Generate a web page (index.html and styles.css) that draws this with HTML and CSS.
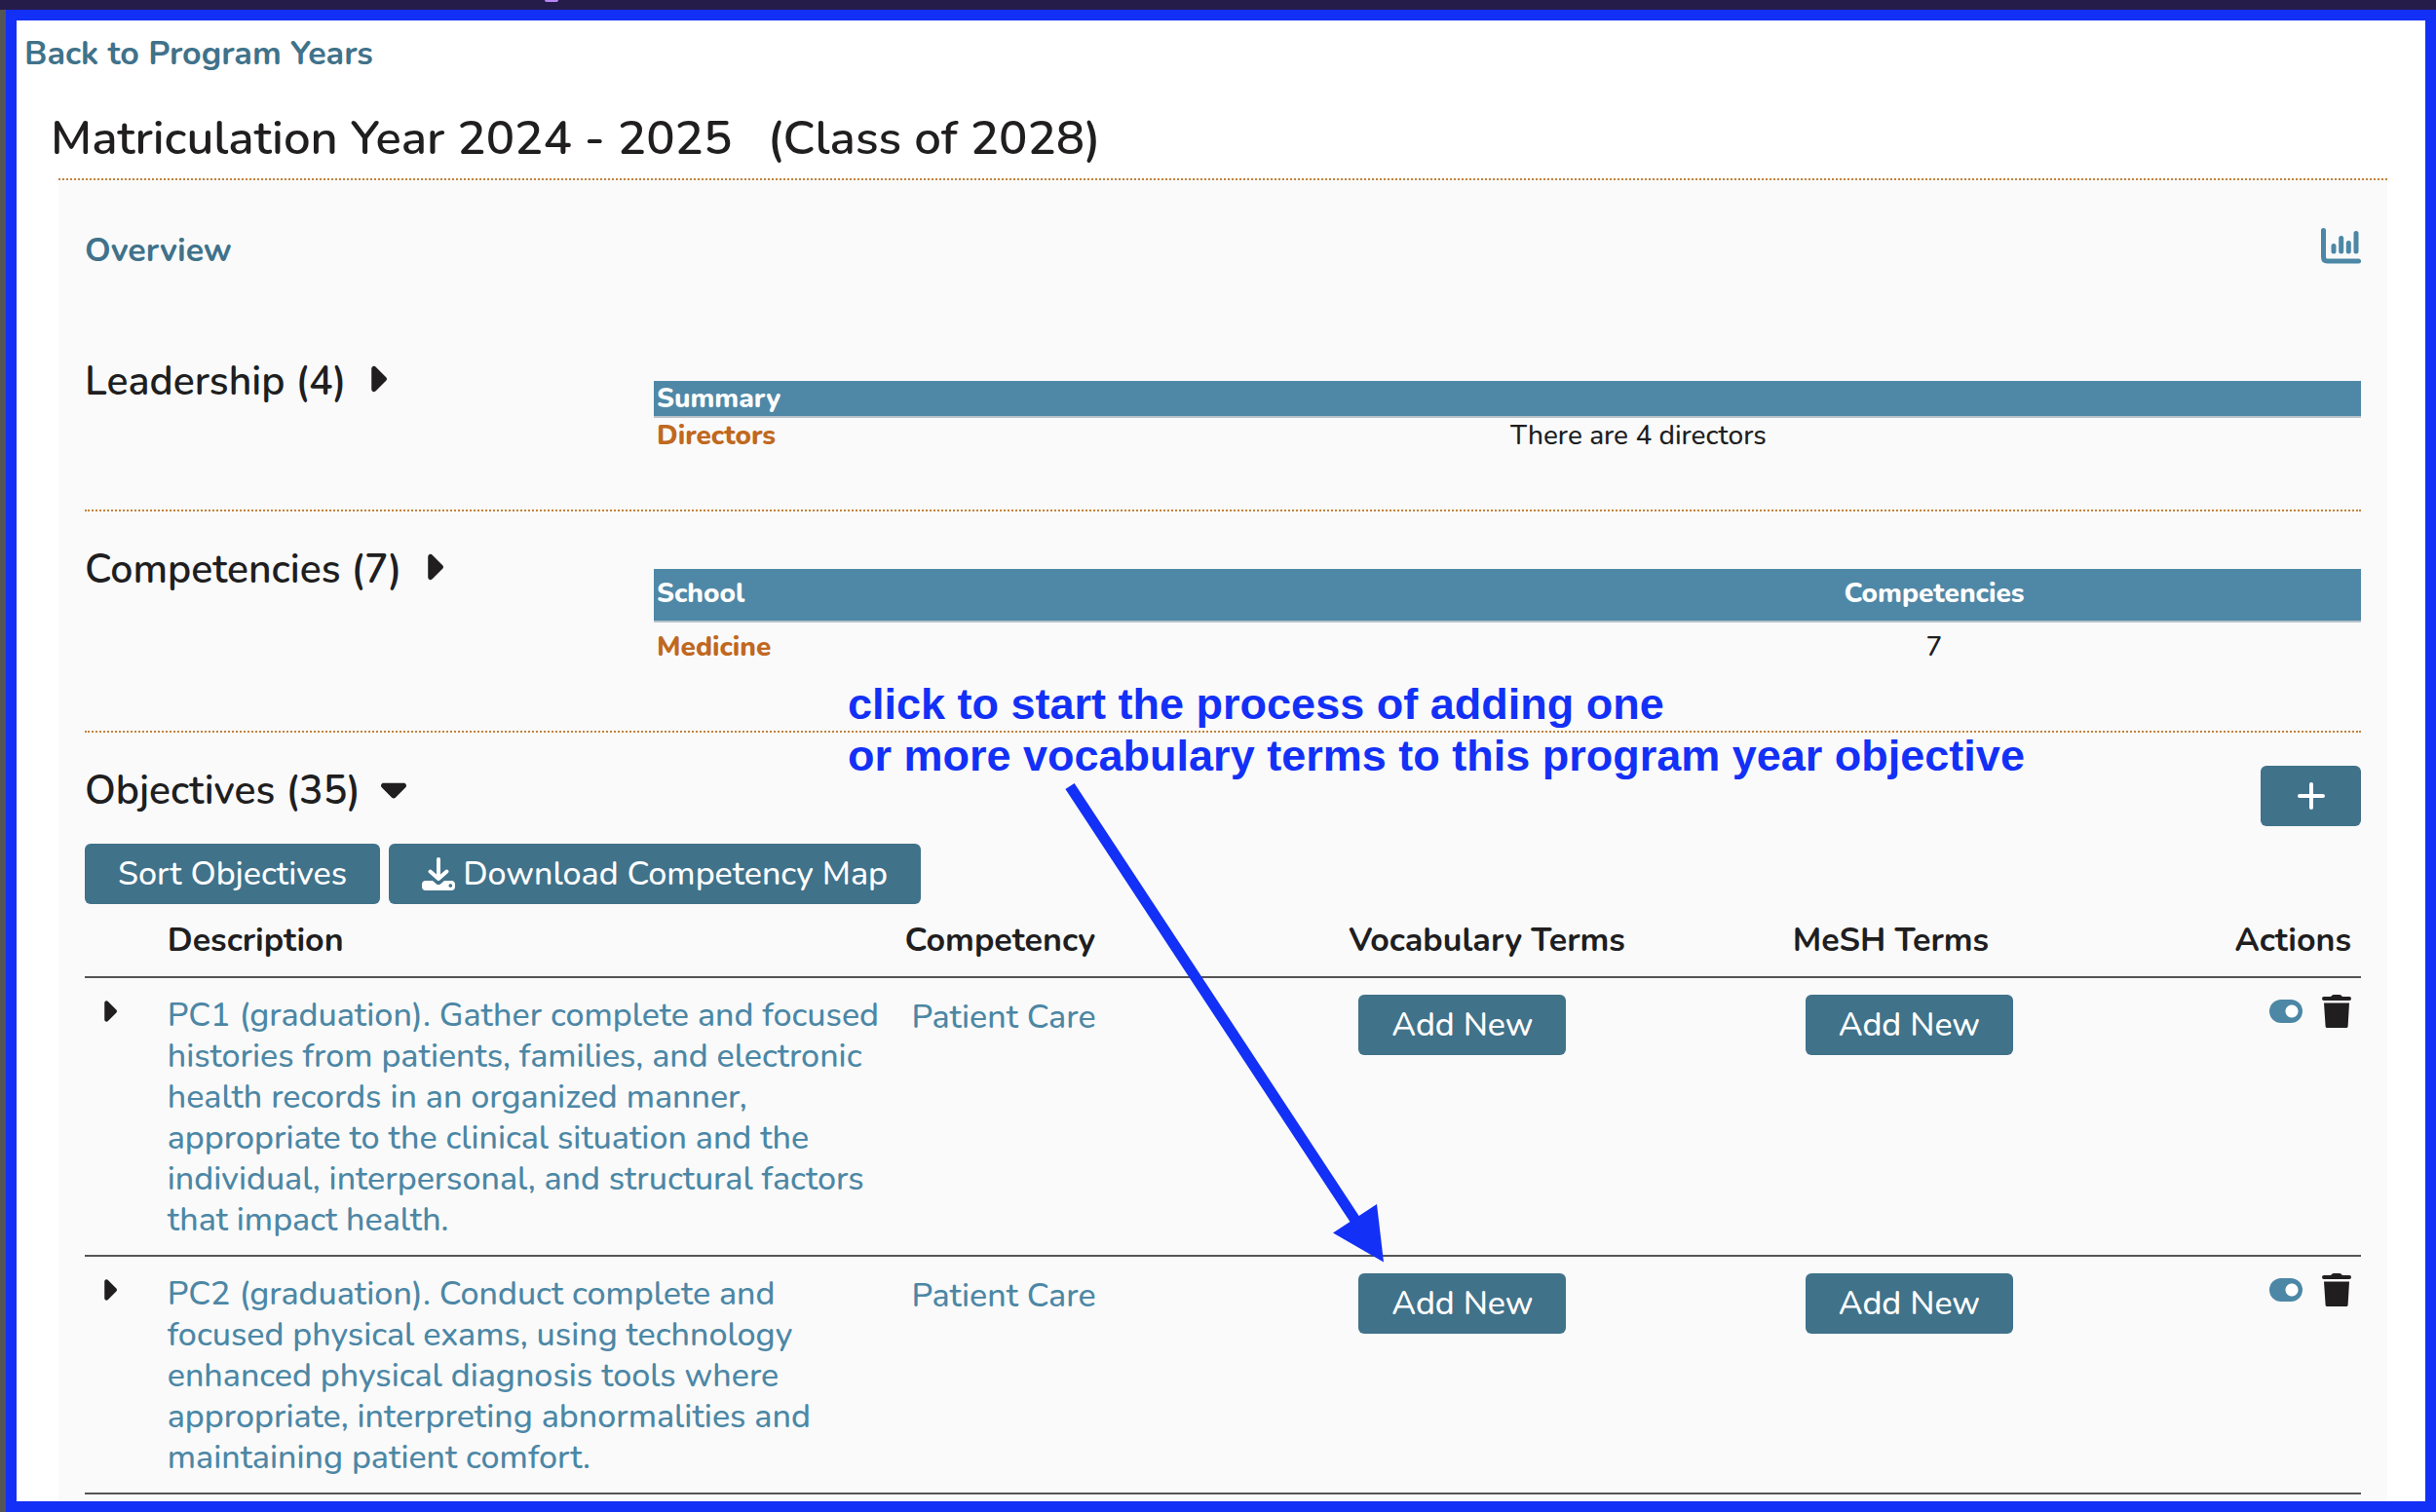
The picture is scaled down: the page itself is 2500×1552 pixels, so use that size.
FILE: index.html
```html
<!DOCTYPE html>
<html lang="en">
<head>
<meta charset="utf-8">
<title>Matriculation Year 2024 - 2025</title>
<link rel="stylesheet" href="styles.css">
</head>
<body>
<svg class="sprite" aria-hidden="true">
  <symbol id="caret-right" viewBox="0 0 256 512"><path d="M246.600 278.600c12.500-12.500 12.500-32.800 0-45.300l-128-128c-9.200-9.200-22.900-11.900-34.900-6.900s-19.800 16.600-19.800 29.600l0 256c0 12.900 7.800 24.600 19.800 29.600s25.700 2.200 34.900-6.900l128-128z"/></symbol>
  <symbol id="caret-down" viewBox="0 0 320 512"><path d="M137.400 374.600c12.500 12.500 32.800 12.500 45.300 0l128-128c9.200-9.200 11.900-22.900 6.900-34.900s-16.600-19.800-29.600-19.800L32 192c-12.900 0-24.600 7.800-29.600 19.800s-2.200 25.700 6.900 34.900l128 128z"/></symbol>
  <symbol id="trash" viewBox="0 0 30 34"><path d="M2 2h7l1.500-1.600Q11 0 12 0h6q1 0 1.500.4L21 2h7q2 0 2 2t-2 2H2Q0 6 0 4t2-2zM2 8.500h26l-1.400 24Q26.500 34 25 34H5.200q-1.500 0-1.600-1.500z"/></symbol>
</svg>
<div class="topbar"><span class="topbar-mark"></span></div>
<main class="frame">
  <a class="back" href="#">Back to Program Years</a>
  <h1 class="title"><span>Matriculation Year 2024 - 2025</span><span>(Class of 2028)</span></h1>
  <div class="panel">
    <div class="overview">
      <h2 class="overview-title">Overview</h2>
      <a class="chart-link" href="#" aria-label="Curriculum charts">
        <svg class="line-icon" width="41" height="38" viewBox="0 0 41 38" stroke-width="5"><path d="M2.500 2.500V30q0 4 4 4H38.500M13 18.500V24M20.700 10.500V24M28.300 15.500V24M36 5.500V24"/></svg>
      </a>
    </div>

    <section class="section split">
      <h2 class="heading"><button class="toggle" type="button">Leadership (4)<svg class="caret"><use href="#caret-right"/></svg></button></h2>
      <table class="summary tight">
        <thead><tr><th scope="col" colspan="2">Summary</th></tr></thead>
        <tbody><tr><th scope="row">Directors</th><td>There are 4 directors</td></tr></tbody>
      </table>
    </section>

    <section class="section split">
      <h2 class="heading"><button class="toggle" type="button">Competencies (7)<svg class="caret"><use href="#caret-right"/></svg></button></h2>
      <table class="summary">
        <thead><tr><th scope="col">School</th><th class="center" scope="col">Competencies</th></tr></thead>
        <tbody><tr><th scope="row">Medicine</th><td class="center">7</td></tr></tbody>
      </table>
    </section>

    <section class="objectives">
      <div class="objectives-head">
        <h2 class="heading"><button class="toggle" type="button">Objectives (35)<svg class="caret down"><use href="#caret-down"/></svg></button></h2>
        <button class="btn plus" type="button" aria-label="Add objective"><svg class="line-icon" width="28" height="28" viewBox="0 0 28 28" stroke-width="4"><path d="M14 2v24M2 14h24"/></svg></button>
      </div>
      <div class="tools">
        <button class="btn" type="button">Sort Objectives</button>
        <button class="btn" type="button"><svg width="34" height="34" viewBox="0 0 34 34"><path d="M17 2v19M8.500 14.500l8.500 7.500 8.500-7.500" fill="none" stroke="currentColor" stroke-width="4" stroke-linecap="round" stroke-linejoin="round"/><path fill-rule="evenodd" d="M4 24h7l4 3.500q2 1.500 4 0l4-3.500h7q4 0 4 4v2q0 4-4 4H4q-4 0-4-4v-2q0-4 4-4zM29.300 27.200a1.800 1.800 0 1 0 .01 0z"/></svg>Download Competency Map</button>
      </div>
      <table class="list">
        <colgroup><col class="col-caret"><col class="col-desc"><col class="col-mid"><col class="col-mid"><col></colgroup>
        <thead>
          <tr><td></td><th scope="col">Description</th><th scope="col">Competency</th><th scope="col">Vocabulary Terms</th><th scope="col"><div class="last"><span>MeSH Terms</span><span>Actions</span></div></th></tr>
        </thead>
        <tbody>
          <tr>
            <td><button class="expand" type="button" aria-label="Expand PC1"><svg><use href="#caret-right"/></svg></button></td>
            <td><a class="desc" href="#">PC1 (graduation). Gather complete and focused histories from patients, families, and electronic health records in an organized manner, appropriate to the clinical situation and the individual, interpersonal, and structural factors that impact health.</a></td>
            <td><button class="link" type="button">Patient Care</button></td>
            <td><button class="btn add" type="button">Add New</button></td>
            <td><div class="last"><button class="btn add" type="button">Add New</button><div class="actions"><input class="switch" type="checkbox" checked aria-label="PC1 active"><button class="icon" type="button" aria-label="Remove PC1"><svg><use href="#trash"/></svg></button></div></div></td>
          </tr>
          <tr>
            <td><button class="expand" type="button" aria-label="Expand PC2"><svg><use href="#caret-right"/></svg></button></td>
            <td><a class="desc" href="#">PC2 (graduation). Conduct complete and focused physical exams, using technology enhanced physical diagnosis tools where appropriate, interpreting abnormalities and maintaining patient comfort.</a></td>
            <td><button class="link" type="button">Patient Care</button></td>
            <td><button class="btn add" type="button">Add New</button></td>
            <td><div class="last"><button class="btn add" type="button">Add New</button><div class="actions"><input class="switch" type="checkbox" checked aria-label="PC2 active"><button class="icon" type="button" aria-label="Remove PC2"><svg><use href="#trash"/></svg></button></div></div></td>
          </tr>
        </tbody>
      </table>
    </section>
  </div>
</main>
<p class="note">click to start the process of adding one<br>or more vocabulary terms to this program year objective</p>
<svg class="arrow" width="332" height="497" viewBox="0 0 332 497" aria-hidden="true"><path d="M8 7L302 454" stroke="#1330f6" stroke-width="11"/><path d="M330 495.500L278 465.500L323 436z" fill="#1330f6"/></svg>
</body>
</html>
```
FILE: styles.css
```css
* { box-sizing: border-box; }

body {
  margin: 0;
  min-height: 100vh;
  display: flex;
  flex-direction: column;
  position: relative;
  background: #555;
  color: #201e1f;
  font: 500 34px/42px Nunito, "Open Sans", sans-serif;
}

h1, h2, p { margin: 0; }
a { color: inherit; text-decoration: none; }
button { font: inherit; color: inherit; border: 0; margin: 0; padding: 0; background: none; }
svg { display: block; fill: currentColor; }
.line-icon { fill: none; stroke: currentColor; stroke-linecap: round; }
.sprite { position: absolute; width: 0; height: 0; }

.topbar { height: 10px; background: #261c4a; padding-left: 559px; }
.topbar-mark { display: block; width: 14px; height: 2px; border-radius: 0 0 7px 7px; background: #b888f8; }

.frame {
  flex: 1;
  display: flex;
  flex-direction: column;
  margin: 0 0 0 6px;
  border: 11px solid #1330f6;
  background: #fff;
}

.back { margin: 13px 0 0 8px; color: #40728a; font-weight: 700; }
.title {
  display: flex;
  gap: 36px;
  margin: 36px 0 11px 35px;
  font-size: 49px;
  line-height: 60px;
  font-weight: 600;
}

.panel {
  flex: 1;
  margin: 0 39px 0 43px;
  padding: 49px 27px 0;
  border-top: 2px dotted #c4823a;
  background: #fafafa;
}

.overview { display: flex; justify-content: space-between; margin-bottom: 88px; padding-top: 2px; }
.overview-title { font-size: 34px; line-height: 42px; font-weight: 700; color: #40728a; }
.chart-link { color: #4c87a5; height: 42px; margin-top: -2px; }

.section { border-bottom: 2px dotted #c4823a; padding-bottom: 59px; margin-bottom: 34px; }
.split { display: grid; grid-template-columns: 1fr 3fr; align-items: start; }
.heading { font-size: 41px; line-height: 52px; font-weight: 600; }
.toggle { display: flex; align-items: center; gap: 21px; }
.caret { width: 21px; height: 42px; margin-bottom: 6px; }
.caret.down { width: 26px; }

.summary {
  width: 100%;
  margin-top: 25px;
  table-layout: fixed;
  border-collapse: separate;
  border-spacing: 0;
  font-size: 28px;
  line-height: 34px;
  text-align: left;
}
.summary th, .summary td { padding: 8px 3px 10px; }
.summary thead th { background: #4f88a6; color: #fff; padding-bottom: 11px; border-bottom: 2px solid #b8c2c8; font-weight: 800; }
.summary tbody th { color: #c06820; font-weight: 800; }
.summary .center { text-align: center; }
.tight thead th { padding: 1px 3px; }
.tight tbody th, .tight tbody td { padding: 1px 3px 0; }

.objectives-head { display: flex; justify-content: space-between; height: 80px; align-items: flex-start; }
.tools { display: flex; gap: 9px; }
.btn {
  display: flex;
  align-items: center;
  justify-content: center;
  gap: 8px;
  padding: 10px 34px;
  border-radius: 6px;
  background: #40728a;
  color: #fff;
}
.plus { width: 103px; height: 62px; }

.list { width: 100%; table-layout: fixed; border-collapse: separate; border-spacing: 0; text-align: left; }
.col-caret { width: 3.5%; }
.col-desc { width: 32.4%; }
.col-mid { width: 19.5%; }
.list th, .list td { padding: 17px 3px 15px; border-bottom: 2px solid #555; vertical-align: top; }
.list thead th, .list thead td { padding: 16px 3px; }
.list th { font-weight: 700; }
.list td:nth-child(2) { padding-right: 15px; }
.desc, .link { color: #4c87a5; }
.desc { display: block; }
.link { padding: 2px 7px; }
.add { margin-left: 10px; }
.last .add { margin-left: 13px; }
.expand { display: block; margin-left: 13px; }
.expand svg { width: 17px; height: 34px; }
.last { display: flex; justify-content: space-between; align-items: flex-start; padding-right: 7px; }
.actions { display: flex; align-items: center; gap: 20px; }
.switch {
  appearance: none;
  width: 34px;
  height: 24px;
  margin: 0;
  border-radius: 12px;
  background: radial-gradient(circle at 23px 12px, #fff 6px, #4c87a5 7px);
}
.icon svg { width: 30px; height: 34px; }

/* callout laid over the page */
.note {
  position: absolute;
  left: 870px;
  top: 696px;
  color: #1330f6;
  font: 700 45px/53px "Liberation Sans", Arial, sans-serif;
  white-space: nowrap;
}
.arrow { position: absolute; left: 1090px; top: 800px; }
```
